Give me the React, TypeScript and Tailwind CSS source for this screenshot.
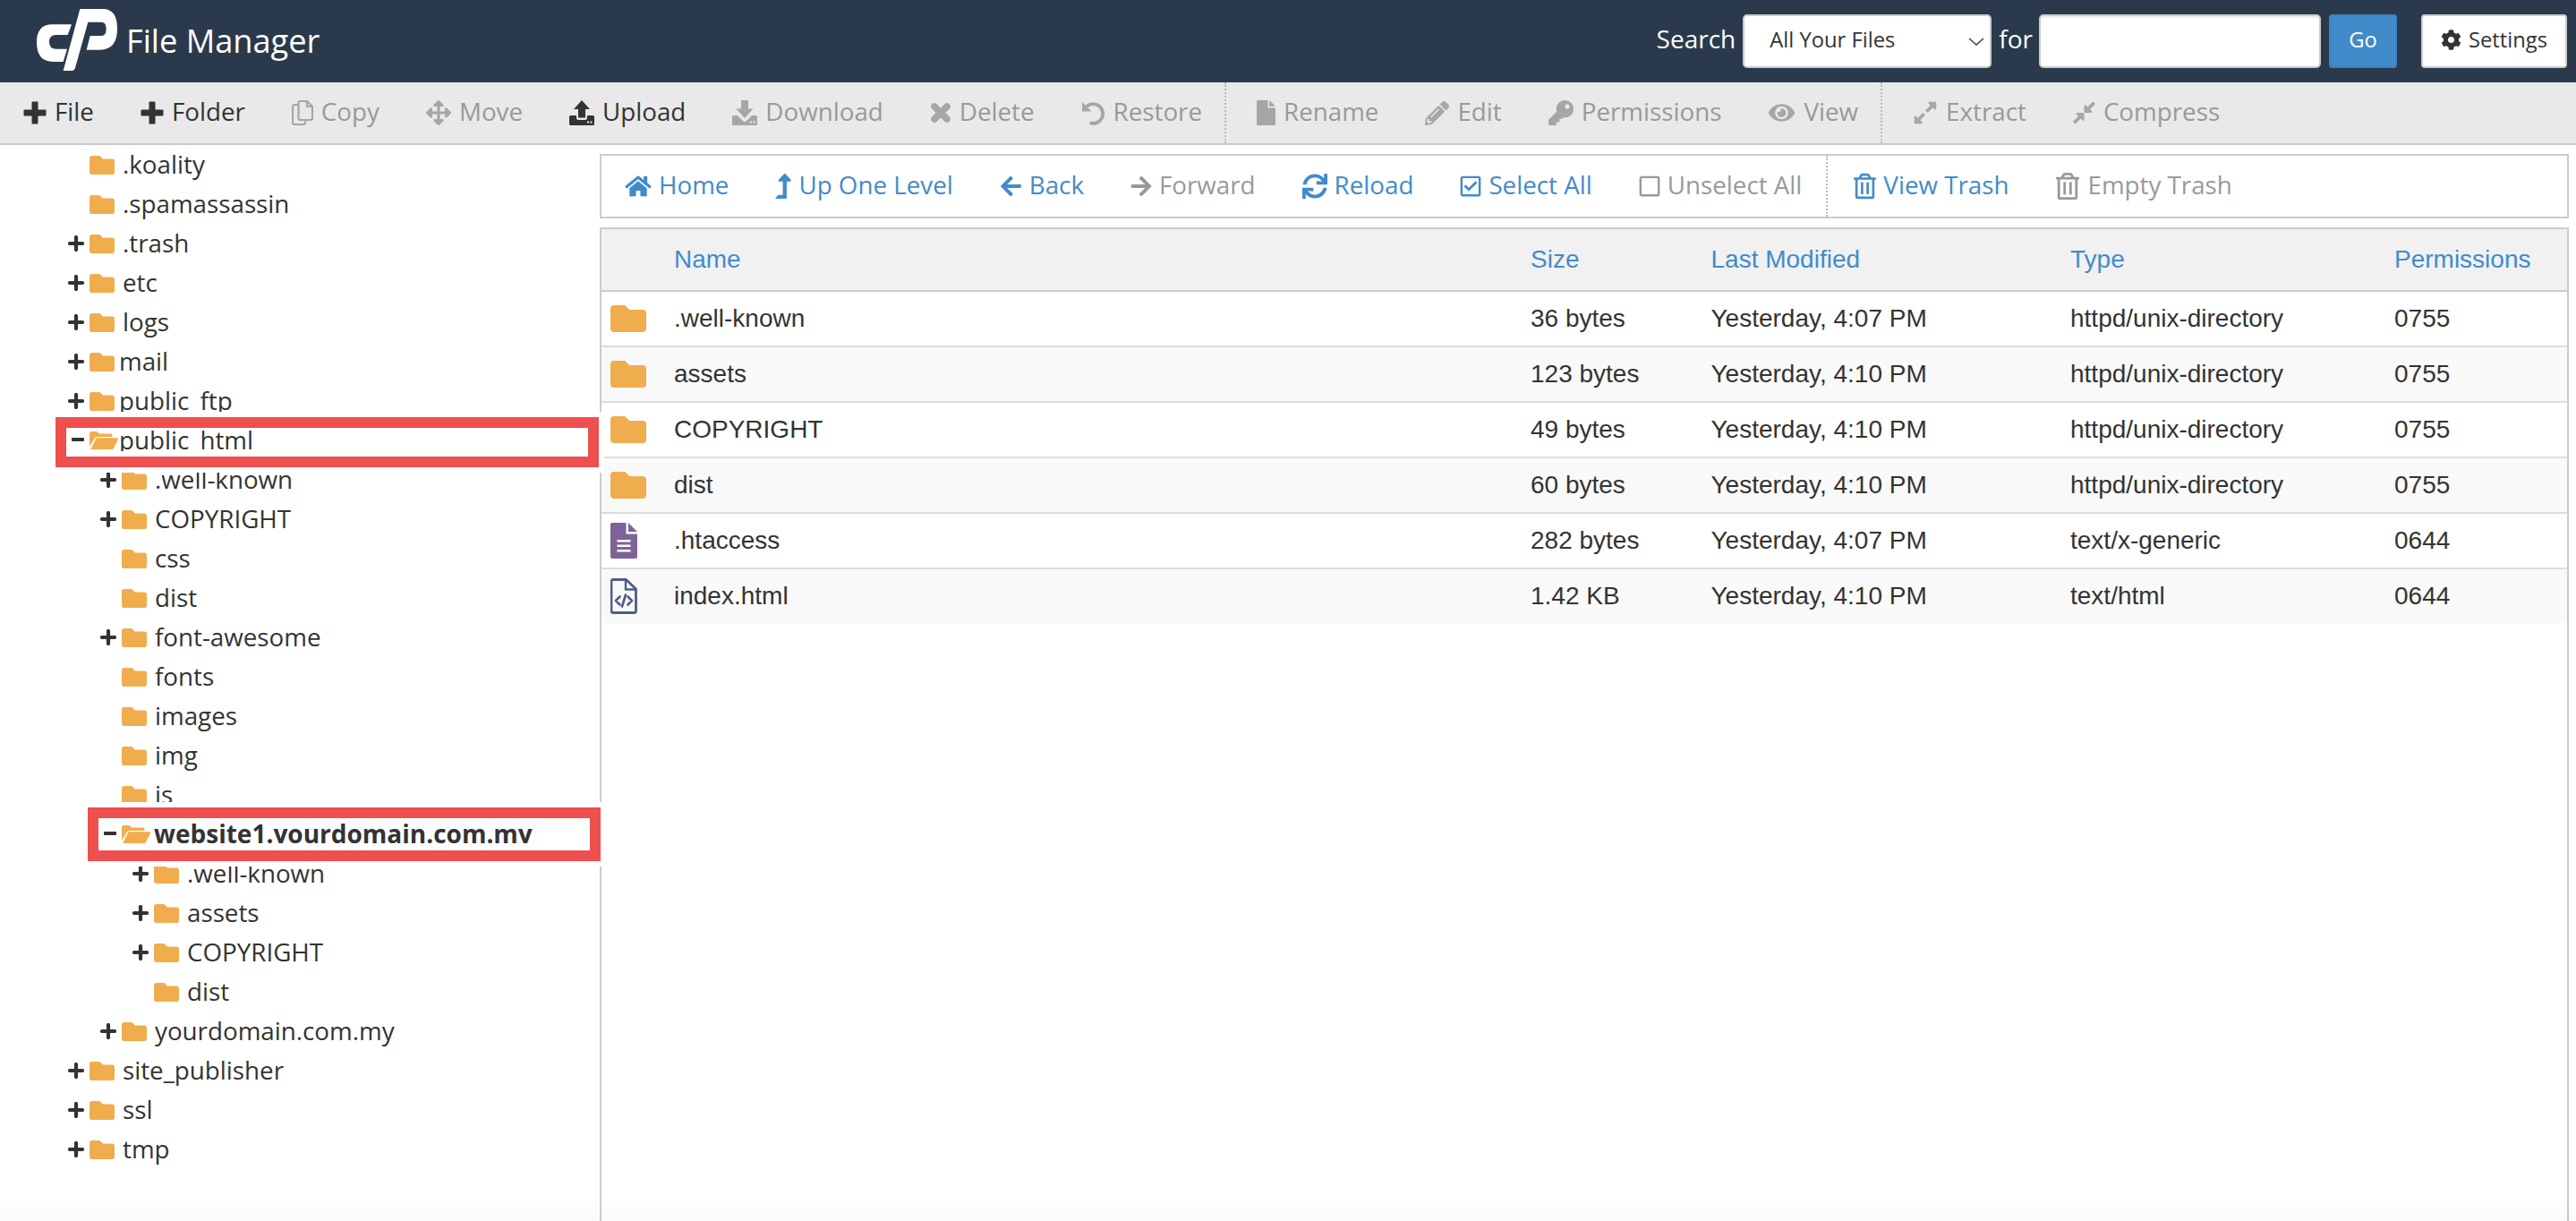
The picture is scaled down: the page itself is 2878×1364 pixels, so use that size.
import React from "react";
import {
  FaArrowsAlt, FaPencilAlt, FaKey, FaEye, FaExpandAlt, FaCompressAlt,
  FaHome, FaLevelUpAlt, FaArrowLeft, FaArrowRight, FaSync, FaRegCheckSquare, FaRegSquare, FaRegTrashAlt, FaCog,
} from "react-icons/fa";

const FOLDER = "M464 128H272l-64-64H48C21.49 64 0 85.49 0 112v288c0 26.51 21.49 48 48 48h416c26.51 0 48-21.49 48-48V176c0-26.51-21.49-48-48-48z";

function Folder({ className }: { className: string }) {
  return (
    <svg viewBox="0 64 512 384" className={className} fill="#f0ad4e" preserveAspectRatio="none">
      <path d={FOLDER} />
    </svg>
  );
}

function OpenFolder() {
  return (
    <svg viewBox="0 0 32 20" className="w-[32px] h-[20px] shrink-0" fill="#f0ad4e">
      <path d="M0 2a2 2 0 0 1 2-2h6l3 2.5h13a1.5 1.5 0 0 1 1.5 1.5v2H8.5Q6.500 6 5.500 8L0 17z" />
      <path d="M7.500 7.300H31a1 1 0 0 1 .9 1.400L27 18.800a2 2 0 0 1-1.800 1.200H1.200z" />
    </svg>
  );
}

function Plus() {
  return (
    <svg viewBox="0 0 18 18" className="w-[18px] h-[18px] shrink-0" stroke="#333" strokeWidth="4.200" strokeLinecap="round">
      <path d="M9 2v14M2 9h14" />
    </svg>
  );
}

function Minus() {
  return <div className="w-[14px] h-[4px] bg-[#333] rounded-[1px] shrink-0 ml-[4px] -mt-[2px]" />;
}

function Logo() {
  return (
    <svg viewBox="33 18 270 207" className="w-[90px] h-[69px] ml-[41px] mt-[-4px] shrink-0" fill="#fff">
      <path d="M85 70H150L137 105H98Q75 105 75 129Q75 152 98 152H135L122 195H88Q33 195 33 130Q33 70 85 70Z" />
      <path d="M178 18H255Q303 18 303 85Q303 155 245 155H200L212 108H250Q266 108 266 85Q266 62 250 62H205L162 215Q159 225 148 225H122Z" />
    </svg>
  );
}

function ToolPlus() {
  return (
    <svg viewBox="0 0 26 26" className="w-full h-full" fill="currentColor">
      <path d="M9.500 1.500a1 1 0 0 1 1-1h5a1 1 0 0 1 1 1V9.500h8a1 1 0 0 1 1 1v5a1 1 0 0 1-1 1h-8v8a1 1 0 0 1-1 1h-5a1 1 0 0 1-1-1v-8h-8a1 1 0 0 1-1-1v-5a1 1 0 0 1 1-1h8z" />
    </svg>
  );
}

function CrossIcon() {
  return (
    <svg viewBox="0 0 24 24" className="w-full h-full" fill="none" stroke="currentColor" strokeWidth="7.500" strokeLinecap="round">
      <path d="M5 5l14 14M19 5L5 19" />
    </svg>
  );
}

function CopyIcon() {
  return (
    <svg viewBox="0 0 24 28" className="w-full h-full" fill="none" stroke="currentColor" strokeWidth="2.200" strokeLinejoin="round">
      <path d="M8 5H3a2 2 0 0 0-2 2v18a2 2 0 0 0 2 2h10a2 2 0 0 0 2-2v-3" />
      <path d="M9.500 1H17l6 6v13a2 2 0 0 1-2 2H9.500a2 2 0 0 1-2-2V3a2 2 0 0 1 2-2z" />
      <path d="M17 1v6h6" />
    </svg>
  );
}

function UploadIcon() {
  return (
    <svg viewBox="0 0 28 28" className="w-full h-full" fill="currentColor">
      <path d="M14 0l9 10h-5v9.500h-8V10H5z" />
      <path d="M1.500 17H8v2.500a2.500 2.500 0 0 0 2.500 2.500h7a2.500 2.500 0 0 0 2.500-2.500V17h6.500a1.500 1.500 0 0 1 1.500 1.500v8a1.500 1.500 0 0 1-1.500 1.500h-25A1.500 1.500 0 0 1 0 26.500v-8A1.500 1.500 0 0 1 1.500 17z" />
      <path d="M20 23.500h2v2h-2zM23.500 23.500h2v2h-2z" fill="#e9e9e9" />
    </svg>
  );
}

function DownloadIcon() {
  return (
    <svg viewBox="0 0 28 28" className="w-full h-full" fill="currentColor">
      <path d="M10 0h8v9.500h5.500L14 20 4.500 9.500H10z" />
      <path d="M1.500 17H6l6 6a2.800 2.800 0 0 0 4 0l6-6h4.500a1.500 1.500 0 0 1 1.500 1.500v8a1.500 1.500 0 0 1-1.500 1.500h-25A1.500 1.500 0 0 1 0 26.500v-8A1.500 1.500 0 0 1 1.500 17z" />
      <path d="M20 23.500h2v2h-2zM23.500 23.500h2v2h-2z" fill="#e9e9e9" />
    </svg>
  );
}

function RestoreIcon() {
  return (
    <svg viewBox="0 0 28 28" className="w-full h-full" fill="currentColor">
      <path d="M1 1v11h11z" />
      <path d="M6 6.500A11.200 11.200 0 1 1 10 25" fill="none" stroke="currentColor" strokeWidth="4" />
    </svg>
  );
}

function FileSolid() {
  return (
    <svg viewBox="0 0 25 33" className="w-full h-full" fill="currentColor" preserveAspectRatio="none">
      <path d="M1.500 0H15v10h10v21.500a1.500 1.500 0 0 1-1.500 1.500h-22A1.500 1.500 0 0 1 0 31.500v-30A1.500 1.500 0 0 1 1.500 0z" />
      <path d="M17 0l8 8h-8z" />
    </svg>
  );
}

type Tool = { icon: React.ReactNode; w: string; h: string; label: string; off?: boolean; sep?: boolean };

const tools: Tool[] = [
  { icon: <ToolPlus />, w: "w-[26px]", h: "h-[26px]", label: "File" },
  { icon: <ToolPlus />, w: "w-[26px]", h: "h-[26px]", label: "Folder" },
  { icon: <CopyIcon />, w: "w-[24px]", h: "h-[28px]", label: "Copy", off: true },
  { icon: <FaArrowsAlt className="w-full h-full" />, w: "w-[28px]", h: "h-[28px]", label: "Move", off: true },
  { icon: <UploadIcon />, w: "w-[28px]", h: "h-[28px]", label: "Upload" },
  { icon: <DownloadIcon />, w: "w-[28px]", h: "h-[28px]", label: "Download", off: true },
  { icon: <CrossIcon />, w: "w-[24px]", h: "h-[24px]", label: "Delete", off: true },
  { icon: <RestoreIcon />, w: "w-[27px]", h: "h-[27px]", label: "Restore", off: true, sep: true },
  { icon: <FileSolid />, w: "w-[21px]", h: "h-[28px]", label: "Rename", off: true },
  { icon: <FaPencilAlt className="w-full h-full" />, w: "w-[27px]", h: "h-[27px]", label: "Edit", off: true },
  { icon: <FaKey className="w-full h-full" />, w: "w-[28px]", h: "h-[28px]", label: "Permissions", off: true },
  { icon: <FaEye className="w-full h-full" />, w: "w-[31px]", h: "h-[26px]", label: "View", off: true, sep: true },
  { icon: <FaExpandAlt className="w-full h-full" />, w: "w-[28px]", h: "h-[28px]", label: "Extract", off: true },
  { icon: <FaCompressAlt className="w-full h-full" />, w: "w-[25px]", h: "h-[28px]", label: "Compress", off: true },
];

type Nav = { icon: React.ReactNode; w: string; h: string; label: string; off?: boolean; sep?: boolean };

const navs: Nav[] = [
  { icon: <FaHome className="w-full h-full" />, w: "w-[30px]", h: "h-[26px]", label: "Home" },
  { icon: <FaLevelUpAlt className="w-full h-full" />, w: "w-[18px]", h: "h-[28px]", label: "Up One Level" },
  { icon: <FaArrowLeft className="w-full h-full" />, w: "w-[25px]", h: "h-[26px]", label: "Back" },
  { icon: <FaArrowRight className="w-full h-full" />, w: "w-[24px]", h: "h-[26px]", label: "Forward", off: true },
  { icon: <FaSync className="w-full h-full" />, w: "w-[28px]", h: "h-[28px]", label: "Reload" },
  { icon: <FaRegCheckSquare className="w-full h-full" />, w: "w-[24px]", h: "h-[26px]", label: "Select All" },
  { icon: <FaRegSquare className="w-full h-full" />, w: "w-[24px]", h: "h-[26px]", label: "Unselect All", off: true, sep: true },
  { icon: <FaRegTrashAlt className="w-full h-full" />, w: "w-[25px]", h: "h-[30px]", label: "View Trash" },
  { icon: <FaRegTrashAlt className="w-full h-full" />, w: "w-[28px]", h: "h-[30px]", label: "Empty Trash", off: true },
];

type Node = { name: string; level: 0 | 1 | 2; mark?: "plus" | "minus"; near?: boolean; bold?: boolean };

const tree: Node[] = [
  { name: ".koality", level: 0 },
  { name: ".spamassassin", level: 0 },
  { name: ".trash", level: 0, mark: "plus" },
  { name: "etc", level: 0, mark: "plus" },
  { name: "logs", level: 0, mark: "plus" },
  { name: "mail", level: 0, mark: "plus", near: true },
  { name: "public_ftp", level: 0, mark: "plus", near: true },
  { name: "public_html", level: 0, mark: "minus", near: true },
  { name: ".well-known", level: 1, mark: "plus" },
  { name: "COPYRIGHT", level: 1, mark: "plus" },
  { name: "css", level: 1 },
  { name: "dist", level: 1 },
  { name: "font-awesome", level: 1, mark: "plus" },
  { name: "fonts", level: 1 },
  { name: "images", level: 1 },
  { name: "img", level: 1 },
  { name: "js", level: 1 },
  { name: "website1.yourdomain.com.my", level: 1, mark: "minus", bold: true },
  { name: ".well-known", level: 2, mark: "plus" },
  { name: "assets", level: 2, mark: "plus" },
  { name: "COPYRIGHT", level: 2, mark: "plus" },
  { name: "dist", level: 2 },
  { name: "yourdomain.com.my", level: 1, mark: "plus" },
  { name: "site_publisher", level: 0, mark: "plus" },
  { name: "ssl", level: 0, mark: "plus" },
  { name: "tmp", level: 0, mark: "plus" },
];

const levelPad = { 0: "pl-[76px]", 1: "pl-[112px]", 2: "pl-[148px]" };

function TreeRow({ node }: { node: Node }) {
  const open = node.mark === "minus";
  return (
    <div className={`h-[44px] flex items-center ${levelPad[node.level]}`}>
      <div className="w-[24px] shrink-0 flex items-center">
        {node.mark === "plus" && <Plus />}
        {node.mark === "minus" && <Minus />}
      </div>
      {open ? <OpenFolder /> : <Folder className="w-[28px] h-[21px] shrink-0" />}
      <span
        className={`leading-[44px] pb-[3px] text-[#333] whitespace-nowrap ${node.bold ? "font-bold text-[28px]" : "text-[27.75px]"} ${
          open && !node.bold ? "ml-px" : node.bold ? "ml-[4px]" : node.near ? "ml-[5px]" : "ml-[9px]"
        }`}
      >
        {node.name}
      </span>
    </div>
  );
}

type Row = { name: string; size: string; mod: string; type: string; perm: string; kind: "dir" | "text" | "html" };

const rows: Row[] = [
  { name: ".well-known", size: "36 bytes", mod: "Yesterday, 4:07 PM", type: "httpd/unix-directory", perm: "0755", kind: "dir" },
  { name: "assets", size: "123 bytes", mod: "Yesterday, 4:10 PM", type: "httpd/unix-directory", perm: "0755", kind: "dir" },
  { name: "COPYRIGHT", size: "49 bytes", mod: "Yesterday, 4:10 PM", type: "httpd/unix-directory", perm: "0755", kind: "dir" },
  { name: "dist", size: "60 bytes", mod: "Yesterday, 4:10 PM", type: "httpd/unix-directory", perm: "0755", kind: "dir" },
  { name: ".htaccess", size: "282 bytes", mod: "Yesterday, 4:07 PM", type: "text/x-generic", perm: "0644", kind: "text" },
  { name: "index.html", size: "1.42 KB", mod: "Yesterday, 4:10 PM", type: "text/html", perm: "0644", kind: "html" },
];

function TextFile() {
  return (
    <svg viewBox="0 0 30 40" className="w-[30px] h-[40px]">
      <path d="M2 0h15.500v12.500H30V38a2 2 0 0 1-2 2H2a2 2 0 0 1-2-2V2a2 2 0 0 1 2-2z" fill="#7e6398" />
      <path d="M20 0l10 10H20z" fill="#7e6398" />
      <path d="M7.500 19h15v2.400h-15zM7.500 24.500h15v2.400h-15zM7.500 30h15v2.400h-15z" fill="#fff" />
    </svg>
  );
}

function HtmlFile() {
  return (
    <svg viewBox="0 0 30 40" className="w-[30px] h-[40px]" fill="none" stroke="#4f5d85" strokeLinejoin="round">
      <path d="M3 1.500h14.500L28.500 12v24.500a2 2 0 0 1-2 2H3a2 2 0 0 1-2-2v-33a2 2 0 0 1 2-2z" strokeWidth="2.800" />
      <path d="M17 2v10.500h11" strokeWidth="2.400" />
      <path d="M10.500 20.500L6 25l4.500 4.500M19.500 20.500L24 25l-4.500 4.500M17 18.500L13 31.500" strokeWidth="2.600" strokeLinecap="round" />
    </svg>
  );
}

const gridCols = "grid grid-cols-[81px_957px_201.5px_401.5px_362px_1fr]";

export default function App() {
  return (
    <div className="relative h-[1364px] w-full overflow-hidden bg-white font-['Open_Sans',sans-serif] text-[#333]">
      <header className="h-[92px] bg-[#2a3a4c] flex items-center">
        <Logo />
        <span className="ml-[10px] -mt-[2px] text-[36.2px] text-white leading-none">File Manager</span>
        <div className="ml-auto mr-[10px] flex items-center text-[23.75px]">
          <span className="text-[28px] text-white mb-[6px] mr-[8px]">Search</span>
          <div className="w-[278px] h-[60px] bg-white rounded-[5px] border-2 border-[#ccc] flex items-center pl-[28px] pr-[6px]">
            <span className="mb-[3px]">All Your Files</span>
            <svg viewBox="0 0 18 9" className="w-[18px] h-[9px] ml-auto" fill="none" stroke="#444" strokeWidth="1.600">
              <path d="M1 1l8 7 8-7" />
            </svg>
          </div>
          <span className="text-[28px] text-white mb-[6px] ml-[8px] mr-[7px]">for</span>
          <input className="w-[315px] h-[60px] bg-white rounded-[5px] border-2 border-[#ccc] shadow-[inset_0_2px_2px_rgba(0,0,0,0.08)]" />
          <button className="ml-[9px] w-[76px] h-[60px] pb-[3px] bg-[#428bca] border-2 border-[#3f83bd] rounded-[4px] text-white">Go</button>
          <button className="ml-[27px] w-[163px] h-[60px] pb-[3px] bg-white border-2 border-[#ccc] rounded-[4px] flex items-center pl-[20px] text-[#333]">
            <FaCog className="w-[23px] h-[25px] mr-[8px]" />
            Settings
          </button>
        </div>
      </header>

      <div className="h-[70px] bg-[#e9e9e9] border-b-2 border-[#c6cace] flex items-stretch pl-[26px] text-[27.75px]">
        {tools.map((t) => (
          <div key={t.label} className="flex items-center">
            <div className={`flex items-center ${t.off ? "text-[#a6a6a6]" : "text-[#333]"}`}>
              <div className={`${t.w} ${t.h} mr-[9px] shrink-0`}>{t.icon}</div>
              <span className={`pb-[3px] ${t.off ? "text-[#999]" : "text-[#333]"}`}>{t.label}</span>
            </div>
            {t.sep ? (
              <div className="self-stretch ml-[25px] mr-[34px] border-l-2 border-dotted border-[#bbb]" />
            ) : (
              <div className="w-[52px]" />
            )}
          </div>
        ))}
      </div>

      <div className="flex h-[1202px]">
        <div className="w-[670px] shrink-0">
          {tree.map((n, i) => (
            <TreeRow key={i} node={n} />
          ))}
        </div>
        <div className="w-[2200px] pt-[10px] flex flex-col">
          <div className="h-[72px] border-2 border-[#ccc] flex items-stretch pl-[26px] text-[27.75px]">
            {navs.map((t) => (
              <div key={t.label} className="flex items-center">
                <div className={`flex items-center ${t.off ? "text-[#999]" : "text-[#428bca]"}`}>
                  <div className={`${t.w} ${t.h} mr-[8px] shrink-0`}>{t.icon}</div>
                  <span className="pb-[3px]">{t.label}</span>
                </div>
                {t.sep ? (
                  <div className="self-stretch ml-[27px] mr-[29px] border-l-2 border-dotted border-[#bbb]" />
                ) : (
                  <div className="w-[52px]" />
                )}
              </div>
            ))}
          </div>
          <div className="mt-[10px] flex-1 border-x-2 border-t-2 border-[#ccc] font-['Liberation_Sans',sans-serif] text-[28px]">
            <div className={`${gridCols} h-[70px] items-center bg-[#f1f1f1] border-b-2 border-[#ccc] text-[#428bca]`}>
              <span />
              <span>Name</span>
              <span>Size</span>
              <span>Last Modified</span>
              <span>Type</span>
              <span>Permissions</span>
            </div>
            {rows.map((r, i) => (
              <div
                key={r.name}
                className={`${gridCols} items-center ${i === rows.length - 1 ? "h-[60px]" : "h-[62px] border-b-2 border-[#ddd]"} ${
                  i % 2 === 1 ? "bg-[#f9f9f9]" : "bg-white"
                }`}
              >
                <div className="pl-[10px] flex items-center">
                  {r.kind === "dir" && <Folder className="w-[40px] h-[30px]" />}
                  {r.kind === "text" && <TextFile />}
                  {r.kind === "html" && <HtmlFile />}
                </div>
                <span>{r.name}</span>
                <span>{r.size}</span>
                <span>{r.mod}</span>
                <span>{r.type}</span>
                <span>{r.perm}</span>
              </div>
            ))}
          </div>
        </div>
      </div>

      <div className="absolute left-[62px] top-[466px] w-[607px] h-[56px] border-[12px] border-[#ee4f4f] shadow-[0_0_0_6px_#fff]">
        <div className="absolute left-0 right-0 bottom-0 h-[6px] bg-white" />
      </div>
      <div className="absolute left-[98px] top-[902px] w-[573px] h-[60px] border-[12px] border-[#ee4f4f] shadow-[0_0_0_6px_#fff]">
        <div className="absolute left-0 right-0 bottom-0 h-[8px] bg-white" />
      </div>
      <div className="absolute left-0 right-0 bottom-0 h-[28px] bg-gradient-to-b from-transparent to-black/[0.02]" />
    </div>
  );
}
